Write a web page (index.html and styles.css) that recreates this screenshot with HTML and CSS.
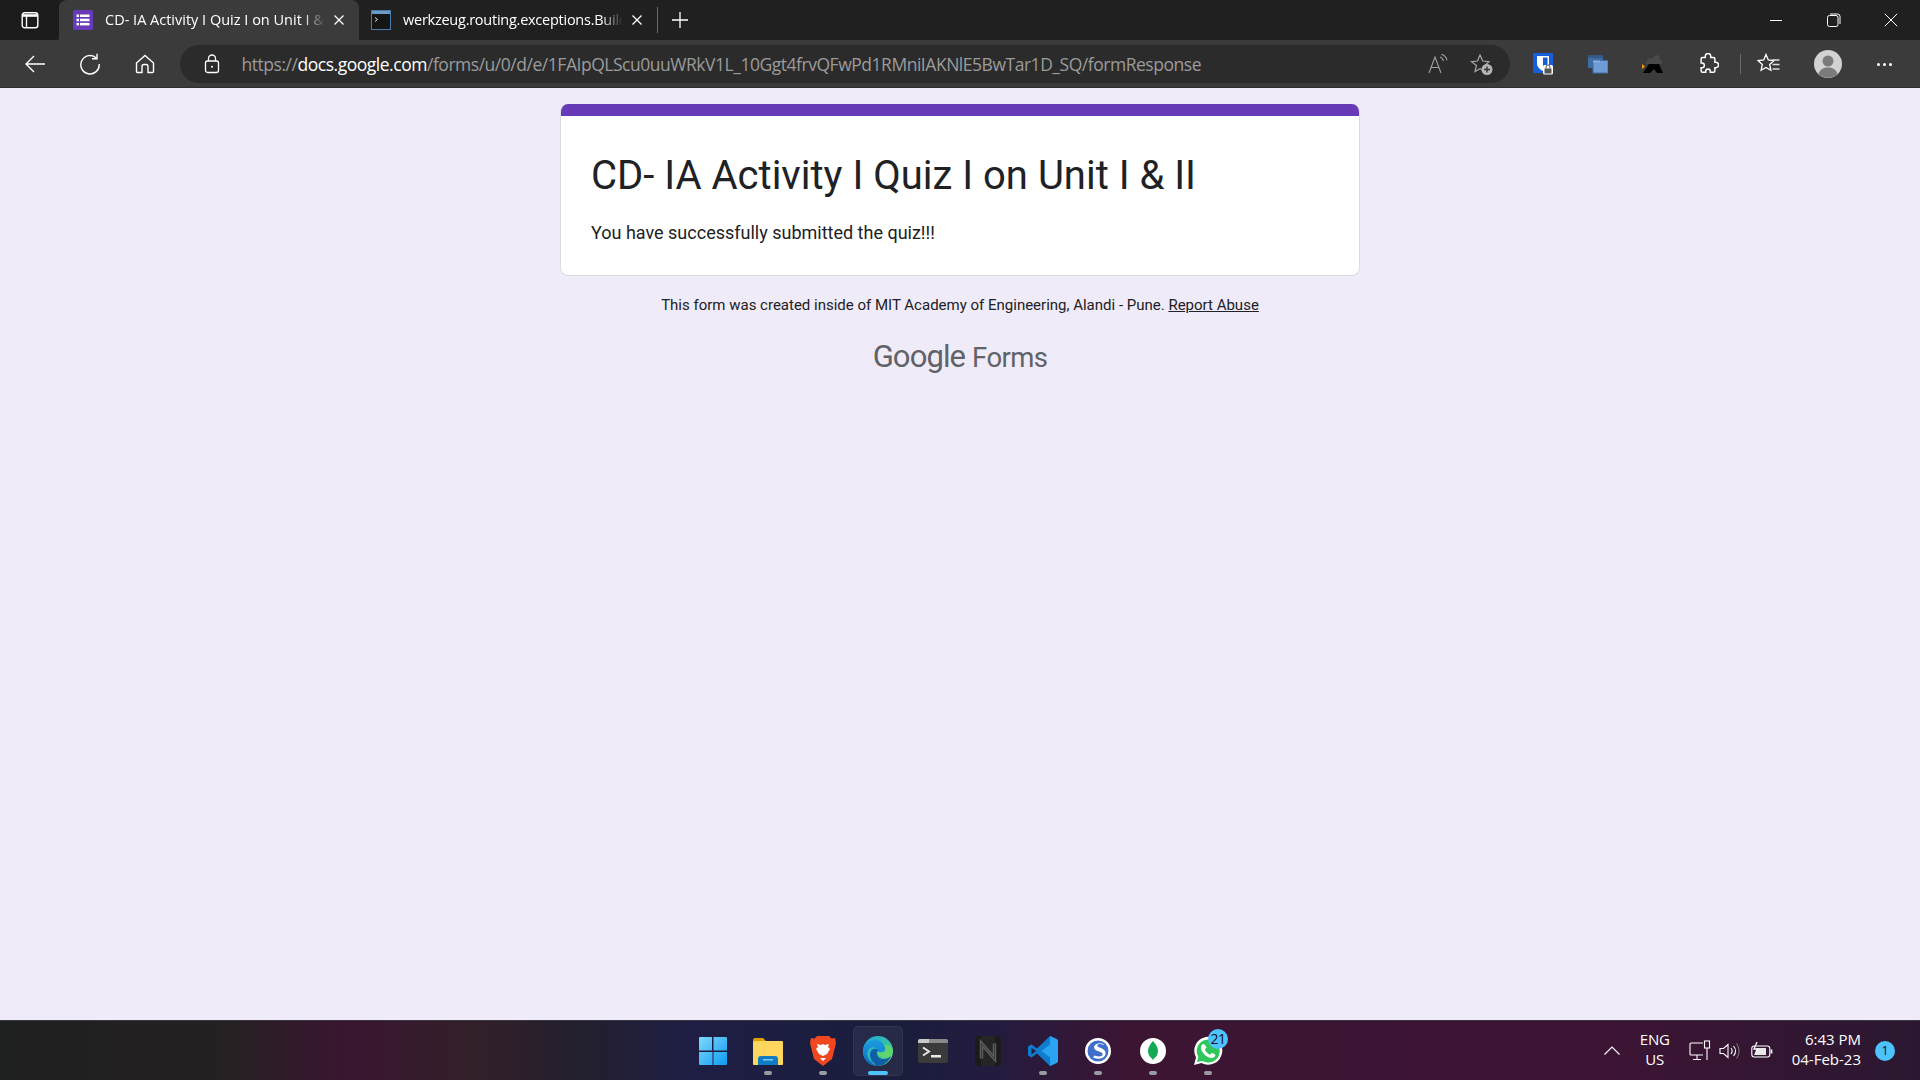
FILE: index.html
```html
<!DOCTYPE html>
<html lang="en">
<head>
<meta charset="utf-8">
<title>CD- IA Activity I Quiz I on Unit I &amp; II</title>
<link rel="stylesheet" href="styles.css">
</head>
<body>
<div class="tabstrip">
  <div class="sidebtn">
    <svg width="18" height="18" viewBox="0 0 18 18" fill="none" stroke="#fff" stroke-width="1.4"><rect x="1.200" y="1.700" width="15.600" height="15" rx="2.500"/><path d="M1.200 4.500h15.600" stroke-width="2.600"/><path d="M5.500 5v11.500"/></svg>
  </div>
  <div class="tab tab-active">
    <svg class="favicon" width="20" height="20" viewBox="0 0 20 20"><rect width="20" height="20" rx="1.500" fill="#673ab7"/><g fill="#fff"><rect x="3.500" y="4.500" width="2.500" height="2.500"/><rect x="3.500" y="8.700" width="2.500" height="2.500"/><rect x="3.500" y="12.900" width="2.500" height="2.500"/><rect x="7" y="4.500" width="9.500" height="2.500"/><rect x="7" y="8.700" width="9.500" height="2.500"/><rect x="7" y="12.900" width="9.500" height="2.500"/></g></svg>
    <span class="tab-title">CD- IA Activity I Quiz I on Unit I &amp; II</span>
    <svg class="tab-x" width="12" height="12" viewBox="0 0 12 12" stroke="#fff" stroke-width="1.300"><path d="M1.500 1.500l9 9M10.500 1.500l-9 9"/></svg>
  </div>
  <div class="tab tab-idle">
    <svg class="favicon" width="20" height="20" viewBox="0 0 20 20"><rect x=".5" y=".5" width="19" height="19" fill="#151515" stroke="#4a7aa8"/><rect x="1" y="1" width="18" height="3" fill="#6d9ac4"/><path d="M4 7.500l2.500 2-2.500 2" fill="none" stroke="#ddd"/></svg>
    <span class="tab-title">werkzeug.routing.exceptions.BuildError</span>
    <svg class="tab-x" width="12" height="12" viewBox="0 0 12 12" stroke="#fff" stroke-width="1.300"><path d="M1.500 1.500l9 9M10.500 1.500l-9 9"/></svg>
  </div>
  <div class="tab-sep"></div>
  <div class="newtab">
    <svg width="18" height="18" viewBox="0 0 18 18" stroke="#fff" stroke-width="1.300"><path d="M9 1v16M1 9h16"/></svg>
  </div>
  <div class="winctl">
    <div class="winbtn"><svg width="14" height="14" viewBox="0 0 14 14" stroke="#fff" stroke-width="1"><path d="M1 7.500h12"/></svg></div>
    <div class="winbtn"><svg width="14" height="14" viewBox="0 0 14 14" fill="none" stroke="#fff" stroke-width="1"><rect x=".5" y="2.500" width="10.500" height="11" rx="2"/><path d="M3 1h7.500A2.500 2.500 0 0 1 13 3.500V11"/></svg></div>
    <div class="winbtn"><svg width="14" height="14" viewBox="0 0 14 14" stroke="#fff" stroke-width="1"><path d="M.8.8l12.400 12.400M13.200.8L.8 13.200"/></svg></div>
  </div>
</div>

<div class="toolbar">
  <div class="navbtn"><svg width="22" height="20" viewBox="0 0 22 20" fill="none" stroke="#fff" stroke-width="1.400"><path d="M21 10H2M10 2l-8 8 8 8"/></svg></div>
  <div class="navbtn"><svg width="22" height="22" viewBox="0 0 22 22" fill="none" stroke="#fff" stroke-width="1.400"><path d="M17.500 5.200A9.200 9.200 0 1 0 20.200 11"/><path d="M18 .8v5h-5"/></svg></div>
  <div class="navbtn"><svg width="20" height="20" viewBox="0 0 20 20" fill="none" stroke="#fff" stroke-width="1.400"><path d="M1.500 9L10 1.500 18.500 9v8.500a1 1 0 0 1-1 1H13v-6a2 2 0 0 0-2-2H9a2 2 0 0 0-2 2v6H2.500a1 1 0 0 1-1-1z"/></svg></div>
  <div class="address">
    <svg class="lock" width="16" height="20" viewBox="0 0 16 20" fill="none" stroke="#fff" stroke-width="1.300"><rect x="1.500" y="7" width="13" height="11.500" rx="2"/><path d="M4.500 7V4.500a3.500 3.500 0 0 1 7 0V7"/><circle cx="8" cy="12.700" r="1" fill="#fff" stroke="none"/></svg>
    <div class="url"><span class="url-dim">https://</span><span class="url-host">docs.google.com</span><span class="url-dim">/forms/u/0/d/e/1FAIpQLScu0uuWRkV1L_10Ggt4frvQFwPd1RMniIAKNlE5BwTar1D_SQ/formResponse</span></div>
    <svg class="addr-icon" width="22" height="22" viewBox="0 0 22 22" fill="none" stroke="#a0a0a0" stroke-width="1.100"><path d="M2 20L8 4l6 16M4.200 14.500h7.600"/><path d="M13 4c2 .7 3 2 3.500 4M14.500 1.300c3 1 5 3 5.500 6"/></svg>
    <svg class="addr-icon addr-star" width="24" height="24" viewBox="0 0 24 24" fill="none" stroke="#a8a8a8" stroke-width="1.200"><path d="M11 2l2.700 6 6.300.7-4.700 4.300L16 18.500l-5-2.800-5 2.800 1.500-6L2.500 8.700l6-.7z" transform="translate(-1 1)"/><circle cx="17" cy="17.500" r="5.500" fill="#b5b5b5" stroke="none"/><path d="M17 14.500v6M14 17.500h6" stroke="#333" stroke-width="1.400"/></svg>
  </div>
  <div class="ext">
    <svg width="20" height="22" viewBox="0 0 20 22"><rect width="20" height="20" rx="1" fill="#175ddc"/><path d="M4 3h12v7.500c0 3.500-3 6-6 7.500-3-1.500-6-4-6-7.500z" fill="#fff"/><path d="M10 4.500h4.500v6c0 2-2.500 3.800-4.500 5z" fill="#175ddc"/><rect x="10" y="12" width="10" height="9.500" rx="1.500" fill="#fff"/><rect x="11.500" y="15.500" width="7" height="5" fill="#555"/><path d="M13 15.500v-1.500a2 2 0 0 1 4 0v1.500" fill="none" stroke="#555" stroke-width="1"/></svg>
  </div>
  <div class="ext">
    <svg width="20" height="20" viewBox="0 0 20 20"><rect x="0" y="1.500" width="15" height="12.500" fill="#3f6da3"/><rect x="0" y="1.500" width="15" height="2.500" fill="#34598a"/><rect x="5" y="6.500" width="15" height="12.500" fill="#6f9bd6" stroke="#3f6da3"/><rect x="5" y="6.500" width="7" height="2" fill="#8ab0e2"/></svg>
  </div>
  <div class="ext">
    <svg width="22" height="22" viewBox="0 0 22 22"><path d="M3 11l3-5 5-1 3-3 4 1-1 3 3 2v3z" fill="#4a4a4a"/><path d="M1 20L7 11h10l4 9H15l-3-4-4 4z" fill="#000"/><path d="M0 11l3 2.500-3 2.500z" fill="#f59a16"/></svg>
  </div>
  <div class="ext">
    <svg width="22" height="22" viewBox="0 0 24 24" fill="none" stroke="#fff" stroke-width="1.600"><path d="M9 3.500a3 3 0 0 1 6 0V5h3a1.500 1.500 0 0 1 1.500 1.500V10h1a3 3 0 0 1 0 6h-1v3.500A1.500 1.500 0 0 1 18 21h-3.500v-1a2.500 2.500 0 0 0-5 0v1H6a1.500 1.500 0 0 1-1.500-1.500V16h1a2.500 2.500 0 0 0 0-5h-1V6.500A1.500 1.500 0 0 1 6 5h3z"/></svg>
  </div>
  <div class="tool-sep"></div>
  <div class="ext">
    <svg width="24" height="24" viewBox="0 0 24 24" fill="none" stroke="#fff" stroke-width="1.300"><path d="M9 2.500l2.300 5.500 5.700.6-4.300 3.900 1.200 5.800L9 15.500l-4.900 2.800 1.200-5.800L1 8.600l5.700-.6z"/><path d="M15.500 8h7M15.500 12.500h7M15.500 17h7" stroke="#ddd"/></svg>
  </div>
  <div class="avatar">
    <svg width="28" height="28" viewBox="0 0 28 28"><circle cx="14" cy="14" r="14" fill="#d2d2d2"/><circle cx="14" cy="11" r="5.500" fill="#7b7b7b"/><path d="M4.500 24c1.500-5 5-6.500 9.500-6.500s8 1.500 9.500 6.500A14 14 0 0 1 4.500 24z" fill="#7b7b7b"/></svg>
  </div>
  <div class="dots"><i></i><i></i><i></i></div>
</div>

<main class="page">
  <section class="card">
    <div class="card-bar"></div>
    <div class="card-body">
      <h1 class="title">CD- IA Activity I Quiz I on Unit I &amp; II</h1>
      <p class="message">You have successfully submitted the quiz!!!</p>
    </div>
  </section>
  <p class="note">This form was created inside of MIT Academy of Engineering, Alandi - Pune. <a href="#" class="abuse">Report Abuse</a></p>
  <div class="wordmark"><span class="wm-google">Google</span> <span class="wm-forms">Forms</span></div>
</main>

<footer class="taskbar">
  <div class="apps">
    <div class="app">
      <svg width="30" height="30" viewBox="0 0 30 30"><defs><linearGradient id="w" x1="0" y1="0" x2="1" y2="1"><stop offset="0" stop-color="#7fd8fb"/><stop offset="1" stop-color="#0f9bf2"/></linearGradient></defs><path d="M1 2a1 1 0 0 1 1-1h12v13.500H1zM15.500 1H28a1 1 0 0 1 1 1v12.500H15.500zM1 16h13.500v13H2a1 1 0 0 1-1-1zM15.500 16H29v12a1 1 0 0 1-1 1H15.500z" fill="url(#w)"/></svg>
    </div>
    <div class="app app-run">
      <svg width="30" height="28" viewBox="0 0 30 28"><path d="M0 3a2 2 0 0 1 2-2h8l3 3h-13z" fill="#e0a100"/><rect y="4" width="30" height="24" rx="1" fill="#ffd75e"/><path d="M5 28v-6a3 3 0 0 1 3-3h14a3 3 0 0 1 3 3v6z" fill="#0f7cc4"/><rect x="10" y="22" width="10" height="1.500" fill="#7cc8f4"/></svg>
    </div>
    <div class="app app-run">
      <svg width="26" height="30" viewBox="0 0 26 30"><path d="M7 0h12l2.500 2.500L25 2l1 5-1.500 6L22 23l-9 7-9-7-2.500-10L0 7l1-5 3.500.5z" fill="#f1471f"/><path d="M13 20l-4-2-3-5 2-2-1-3 4 1 2-1 2 1 4-1-1 3 2 2-3 5zM10 22h6l-3 3z" fill="#fff"/></svg>
    </div>
    <div class="app app-active">
      <svg width="30" height="30" viewBox="0 0 30 30"><defs><linearGradient id="e1" x1="0" y1="0" x2="1" y2="1"><stop offset="0" stop-color="#1da8e0"/><stop offset=".55" stop-color="#35c1a8"/><stop offset="1" stop-color="#7fdc5c"/></linearGradient><linearGradient id="e2" x1="0" y1="0" x2="0" y2="1"><stop offset="0" stop-color="#1b9de2"/><stop offset="1" stop-color="#0c6cc0"/></linearGradient></defs><circle cx="15" cy="15" r="15" fill="url(#e1)"/><path d="M0 15C1 6 9 3 14 4c5 1 8 5 8 9 0 2-2 3-5 3-2 0-3-1-3-1 1-4-5-5-8-2-3 3-2 10 3 13a11 11 0 0 0 4 3.900C6 30 0 23 0 15z" fill="url(#e2)"/><path d="M11 27c-4-3-5-8-3-12 2-3 6-3 7-.5-2 3-.5 8 5 8.500 3 .2 6-1 8-3-2 6-8 10-14 10-1 0-2-1-3-3z" fill="#0f5ea8"/><path d="M30 15c0 1.500-1 4-3 5.500-3 1.500-7 1.500-10-.5a5 5 0 0 1-3-5c.500 1.500 3 1.800 5.500 1.500 5-.5 4-5 1-8 4 0 9 2 9.500 6.500z" fill="#5fd36c"/></svg>
    </div>
    <div class="app">
      <svg width="30" height="24" viewBox="0 0 30 24"><rect width="30" height="24" rx="2" fill="#3a3a3a"/><path d="M0 2a2 2 0 0 1 2-2h9v4H0z" fill="#c9c9c9"/><path d="M11 0h17a2 2 0 0 1 2 2v2H11z" fill="#8a8a8a"/><path d="M5 8.500l6 4-6 4" fill="none" stroke="#e8e8e8" stroke-width="2"/><rect x="13" y="16" width="10" height="2.500" fill="#e8e8e8"/></svg>
    </div>
    <div class="app">
      <svg width="30" height="30" viewBox="0 0 30 30"><path d="M5 0h20l3 2v26l-3 2H5l-3-2V2z" fill="#1b1b1b"/><path d="M8 0h14v30H8z" fill="#252525"/><path d="M8.500 22.500v-15l13 15v-15" fill="none" stroke="#5c5c5c" stroke-width="3.500"/><path d="M8.500 22.500v-15l13 15v-15" fill="none" stroke="#3c3c3c" stroke-width="1"/></svg>
    </div>
    <div class="app app-run">
      <svg width="30" height="30" viewBox="0 0 30 30"><path d="M22 0l7 3.300a2 2 0 0 1 1 1.800v19.800a2 2 0 0 1-1 1.800L22 30 9 17.500l-5.500 4L0 19.500v-9L3.500 8.500l5.500 4z" fill="#0f7ccd"/><path d="M22 0l7 3.300a2 2 0 0 1 1 1.800v19.800a2 2 0 0 1-1 1.800L22 30V21.500L13.500 15 22 8.500z" fill="#2aa4f0"/><path d="M3.500 12l4.500 3-4.500 3.500z" fill="#241d3a"/></svg>
    </div>
    <div class="app app-run">
      <svg width="26" height="26" viewBox="0 0 26 26"><circle cx="13" cy="13" r="13" fill="#fff"/><circle cx="13" cy="13" r="10.500" fill="#3f6fcb"/><path d="M19 6.500c-3-2-8-1.500-9.500 1.500S11 12.500 14 13.500s4 2 3.500 3.500-4 2-8 .5l-1.500 2c4 2 10 1.500 12-2 1.500-3 0-6-4-7.500-3-1-4-1.500-3.500-3s3.500-1.500 6 0z" fill="#fff"/></svg>
    </div>
    <div class="app app-run">
      <svg width="26" height="26" viewBox="0 0 26 26"><circle cx="13" cy="13" r="13" fill="#fff"/><path d="M13 3c3 3.500 5 6.500 5 10s-2 6.500-4.500 8l-.5 2-.5-2C10 19.500 8 16.500 8 13s2-6.500 5-10z" fill="#13aa52"/></svg>
    </div>
    <div class="app app-run">
      <svg width="30" height="30" viewBox="0 0 30 30"><path d="M1 29l2-7.500A14 14 0 1 1 8.500 27z" fill="#fff"/><path d="M4 26l1.400-5A11.500 11.500 0 1 1 9.500 25z" fill="#2fc65a"/><path d="M10.500 8c-1 0-2.500 1.500-2.500 3.500 0 5 6 10.500 10.500 10.500 2.500 0 4-1.500 4-3 0-.5-3-2-3.500-2s-1.500 1.500-2 1.500c-1.500 0-5-3.500-5-5 0-.5 1.500-1.500 1.500-2S11.500 8 10.500 8z" fill="#fff"/></svg>
      <span class="wa-badge">21</span>
    </div>
  </div>
  <div class="tray">
    <svg class="chevron" width="16" height="9" viewBox="0 0 16 9" fill="none" stroke="#fff" stroke-width="1.100"><path d="M.5 8.500L8 1l7.500 7.500"/></svg>
    <div class="lang"><span>ENG</span><span>US</span></div>
    <svg class="tray-ico ico-monitor" width="22" height="22" viewBox="0 0 22 22" fill="none" stroke="#fff" stroke-width="1.100"><path d="M14 3H2a1 1 0 0 0-1 1v10a1 1 0 0 0 1 1h12"/><path d="M8 15v4M4 19.500h8"/><rect x="15.500" y="1" width="5" height="7"/><path d="M18 8v12"/></svg>
    <svg class="tray-ico ico-speaker" width="22" height="18" viewBox="0 0 22 18" fill="none" stroke="#fff" stroke-width="1.100"><path d="M1 6.500h3.500L9 2.500v13l-4.500-4H1z"/><path d="M12 6c1.500 2 1.500 4 0 6M14.500 4c2.500 3 2.500 7 0 10"/><path d="M17.500 1.500c3.500 4.500 3.500 10.500 0 15" stroke="#777"/></svg>
    <svg class="tray-ico ico-battery" width="22" height="18" viewBox="0 0 22 18" fill="none" stroke="#fff" stroke-width="1.100"><rect x=".8" y="4" width="18" height="11" rx="2.500"/><path d="M20.500 7.500v4" stroke-width="1.600"/><path d="M3 13l3-7h9v7z" fill="#e8e8e8" stroke="none"/><path d="M6 0L3 7h3.500L5 11" stroke-width="1.300"/></svg>
    <div class="clock"><span>6:43 PM</span><span>04-Feb-23</span></div>
    <div class="notif">1</div>
  </div>
</footer>
</body>
</html>
```
FILE: styles.css
```css
* { box-sizing: border-box; }
html, body { height: 100%; }
body {
  margin: 0;
  height: 100vh;
  overflow: hidden;
  display: flex;
  flex-direction: column;
  background: #f0ebf8;
  font-family: "Roboto", sans-serif;
}

/* Browser tab strip */
.tabstrip {
  height: 40px;
  flex: none;
  display: flex;
  align-items: flex-end;
  background: #202020;
  color: #fff;
  font-family: "Open Sans", "Noto Sans", sans-serif;
  font-size: 14.500px;
}
.sidebtn {
  width: 59px;
  height: 40px;
  display: flex;
  align-items: center;
  justify-content: center;
  background: #1b1b1b;
  border-bottom-right-radius: 6px;
}
.tab {
  height: 40px;
  display: flex;
  align-items: center;
  width: 300px;
  padding-left: 14px;
}
.tab-active { background: #3b3b3b; border-radius: 8px 8px 0 0; }
.tab-idle { width: 298px; padding-left: 12px; }
.favicon { flex: none; }
.tab-title {
  flex: 1;
  min-width: 0;
  margin-left: 12px;
  padding-bottom: 1px;
  white-space: nowrap;
  overflow: hidden;
  letter-spacing: -0.25px;
  -webkit-mask-image: linear-gradient(to right, #000 90%, transparent 100%);
  mask-image: linear-gradient(to right, #000 90%, transparent 100%);
}
.tab-active .tab-title { letter-spacing: 0; }
.tab-x { flex: none; margin: 0 14px 0 8px; }
.tab-sep { width: 1px; height: 26px; margin: 0 0 7px 0; background: #6a6a6a; }
.newtab {
  width: 44px;
  height: 40px;
  display: flex;
  align-items: center;
  justify-content: center;
}
.winctl { margin-left: auto; display: flex; height: 40px; }
.winbtn {
  width: 57.500px;
  height: 40px;
  display: flex;
  align-items: center;
  justify-content: center;
}

/* Browser toolbar */
.toolbar {
  height: 48px;
  flex: none;
  display: flex;
  align-items: center;
  padding: 1px 9.500px 0 7px;
  background: #3b3b3b;
  border-bottom: 1px solid #2e2e2e;
}
.navbtn {
  width: 55px;
  height: 38px;
  flex: none;
  display: flex;
  align-items: center;
  justify-content: center;
}
.address {
  flex: 1;
  min-width: 0;
  height: 38px;
  margin-left: 8px;
  padding: 0 12px 0 24px;
  display: flex;
  align-items: center;
  background: #2b2b2b;
  border-radius: 19px;
  font-family: "Open Sans", "Noto Sans", sans-serif;
  font-size: 17.500px;
  letter-spacing: -0.47px;
}
.lock { flex: none; }
.url { flex: 1; margin-left: 21.500px; padding-bottom: 1px; white-space: nowrap; overflow: hidden; }
.url-dim { color: #9b9b9b; }
.url-host { color: #fff; }
.addr-icon { flex: none; }
.addr-star { margin-left: 21.500px; margin-right: 4px; }
.ext {
  width: 55px;
  height: 38px;
  flex: none;
  display: flex;
  align-items: center;
  justify-content: center;
}
.address + .ext { margin-left: 5px; }
.tool-sep { width: 1px; height: 20px; margin: 0 1px 0 4.500px; background: #6a6a6a; flex: none; }
.avatar {
  width: 62px;
  height: 38px;
  flex: none;
  display: flex;
  align-items: center;
  justify-content: center;
}
.dots { width: 52px; display: flex; justify-content: center; gap: 3px; flex: none; }
.dots i { width: 3px; height: 3px; background: #fff; border-radius: 50%; }

/* Page content */
.page {
  flex: 1;
  min-height: 0;
  display: flex;
  flex-direction: column;
  align-items: center;
  padding-top: 16px;
  background: #f0ebf8;
}
.card {
  width: 800px;
  background: #fff;
  border: 1px solid #dadce0;
  border-top: 0;
  border-radius: 8px;
  overflow: hidden;
}
.card-bar { height: 12px; margin: 0 -1px; background: #673ab7; }
.card-body { padding: 36px 30px 30px; }
.title {
  margin: 0;
  font-size: 40px;
  line-height: 48px;
  font-weight: 400;
  color: #202124;
}
.message {
  margin: 21px 0 0;
  font-size: 18px;
  line-height: 24px;
  color: #202124;
}
.note {
  margin: 19px 0 0;
  font-size: 15px;
  line-height: 20px;
  color: #202124;
}
.abuse { color: #202124; text-decoration: underline; }
.wordmark {
  margin-top: 24px;
  font-family: "Roboto", sans-serif;
  line-height: 36px;
  color: #5f6368;
  display: flex;
  align-items: baseline;
  gap: 7px;
}
.wm-google { font-size: 31px; font-weight: 400; letter-spacing: -0.9px; }
.wm-forms { font-size: 27.500px; font-weight: 400; letter-spacing: -0.6px; }

/* Windows taskbar */
.taskbar {
  height: 60px;
  flex: none;
  position: relative;
  display: flex;
  align-items: center;
  justify-content: center;
  border-top: 1px solid #3a3742;
  background: linear-gradient(90deg, #1f2020 0, #252022 230px, #3a1530 345px, #33202a 470px, #231f2c 570px, #1e1e44 690px, #1a1d3c 900px, #241b3e 1000px, #3c1533 1130px, #3d1434 1600px, #2b1830 1920px);
  color: #fff;
}
.apps { display: flex; width: 550px; }
.app {
  position: relative;
  width: 55px;
  height: 50px;
  display: flex;
  align-items: center;
  justify-content: center;
  border-radius: 5px;
}
.app-run::after, .app-active::after {
  content: "";
  position: absolute;
  left: 50%;
  bottom: 1px;
  width: 8px;
  height: 4px;
  margin-left: -4px;
  border-radius: 2px;
  background: #9a9aa2;
}
.app-active {
  width: 50px;
  margin: 0 2.500px;
  background: rgba(255,255,255,.06);
  box-shadow: inset 0 0 0 1px rgba(255,255,255,.05);
}
.app-active::after { width: 20px; margin-left: -10px; background: #4cc2ff; }
.wa-badge {
  position: absolute;
  top: 3px;
  right: 7px;
  width: 20px;
  height: 20px;
  border-radius: 50%;
  background: #4cc2ff;
  color: #111;
  font: 14px/20px "Open Sans", sans-serif;
  text-align: center;
  letter-spacing: -0.5px;
}
.tray {
  position: absolute;
  right: 0;
  top: 0;
  bottom: 0;
  display: flex;
  align-items: center;
  font-family: "Open Sans", "Noto Sans", sans-serif;
  font-size: 15px;
  line-height: 20px;
  padding-right: 25px;
}
.chevron { flex: none; margin-right: 20px; }
.lang { display: flex; flex-direction: column; align-items: center; letter-spacing: -0.2px; padding-bottom: 4px; }
.tray-ico { flex: none; }
.ico-monitor { margin-left: 19px; }
.ico-speaker { margin-left: 8px; }
.ico-battery { margin-left: 10px; }
.clock { display: flex; flex-direction: column; align-items: flex-end; margin: 0 14px 0 19px; padding-bottom: 4px; }
.notif {
  width: 20px;
  height: 20px;
  border-radius: 50%;
  background: #4cc2ff;
  color: #111;
  font-size: 12.500px;
  line-height: 20px;
  text-align: center;
}
```
